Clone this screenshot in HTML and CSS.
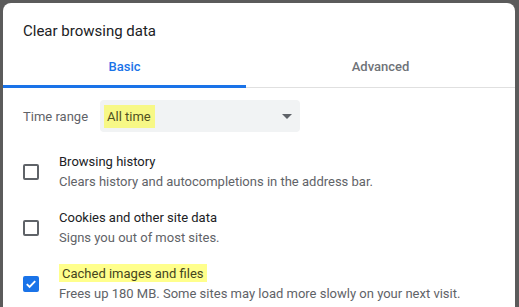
FILE: index.html
```html
<!DOCTYPE html>
<html lang="en">
<head>
    <meta charset="UTF-8">
    <meta name="viewport" content="width=device-width, initial-scale=1.0">
    <title>Clear browsing data</title>
    <link rel="stylesheet" href="styles.css">
</head>
<body>
    <div class="dialog">
        <h1 class="title">Clear browsing data</h1>

        <div class="tabs">
            <div class="tab active">Basic</div>
            <div class="tab">Advanced</div>
        </div>

        <div class="time-row">
            <span class="time-label">Time range</span>
            <div class="select">
                <span class="mark mark-select">All time</span>
                <span class="arrow"></span>
            </div>
        </div>

        <div class="option">
            <span class="checkbox"></span>
            <div class="option-text">
                <div class="option-title">Browsing history</div>
                <div class="option-desc">Clears history and autocompletions in the address bar.</div>
            </div>
        </div>

        <div class="option">
            <span class="checkbox"></span>
            <div class="option-text">
                <div class="option-title">Cookies and other site data</div>
                <div class="option-desc">Signs you out of most sites.</div>
            </div>
        </div>

        <div class="option">
            <span class="checkbox checked">
                <svg width="12" height="12" viewBox="0 0 12 12">
                    <path d="M1.8 6.2 L4.6 9 L10.2 3.2" fill="none" stroke="#fff" stroke-width="1.9"/>
                </svg>
            </span>
            <div class="option-text">
                <div class="option-title"><span class="mark">Cached images and files</span></div>
                <div class="option-desc">Frees up 180 MB. Some sites may load more slowly on your next visit.</div>
            </div>
        </div>
    </div>
</body>
</html>
```

FILE: styles.css
```css
body {
    margin: 0;
    background-color: #5b5b5b;
    font-family: Roboto, "Liberation Sans", Arial, sans-serif;
    overflow: hidden;
}
.dialog {
    margin: 3px 4px 0 3px;
    height: 320px;
    background-color: #fff;
    border-radius: 8px 8px 0 0;
}
.title {
    margin: 0;
    padding: 17px 20px 0;
    font-size: 15px;
    font-weight: normal;
    line-height: 22px;
    color: #202124;
}
.tabs {
    display: grid;
    grid-template-columns: 243px 1fr;
    border-bottom: 1px solid #e0e0e0;
}
.tab {
    position: relative;
    padding: 15px 0 10px;
    text-align: center;
    font-size: 13px;
    font-weight: 500;
    line-height: 20px;
    color: #6f7378;
}
.tab.active {
    color: #1a73e8;
}
.tab.active::after {
    content: "";
    position: absolute;
    left: 0;
    right: 0;
    bottom: -1px;
    height: 3px;
    background-color: #1a73e8;
}
.time-row {
    display: flex;
    align-items: center;
    margin: 12px 0;
    padding-left: 20px;
}
.time-label {
    width: 77px;
    font-size: 13px;
    color: #5f6368;
}
.select {
    display: flex;
    align-items: center;
    justify-content: space-between;
    box-sizing: border-box;
    width: 200px;
    height: 32px;
    padding: 0 8px 0 4px;
    background-color: #f1f3f4;
    border-radius: 4px;
    font-size: 13px;
    line-height: 20px;
}
.mark {
    padding: 2px 4px 1px 3px;
    background-color: rgba(255, 255, 0, 0.45);
    color: #45451c;
}
.mark-select {
    color: #50511f;
}
.arrow {
    width: 0;
    height: 0;
    border-left: 5px solid transparent;
    border-right: 5px solid transparent;
    border-top: 5px solid #5f6368;
}
.option {
    display: flex;
    align-items: center;
    padding: 8px 20px;
}
.checkbox {
    display: flex;
    align-items: center;
    justify-content: center;
    box-sizing: border-box;
    flex: none;
    width: 16px;
    height: 16px;
    margin-right: 20px;
    border: 2px solid #5f6368;
    border-radius: 2px;
}
.checkbox.checked {
    background-color: #1a73e8;
    border-color: #1a73e8;
}
.option-text {
    font-size: 13px;
    line-height: 20px;
}
.option-title {
    color: #202124;
}
.option-desc {
    color: #5f6368;
}
```
